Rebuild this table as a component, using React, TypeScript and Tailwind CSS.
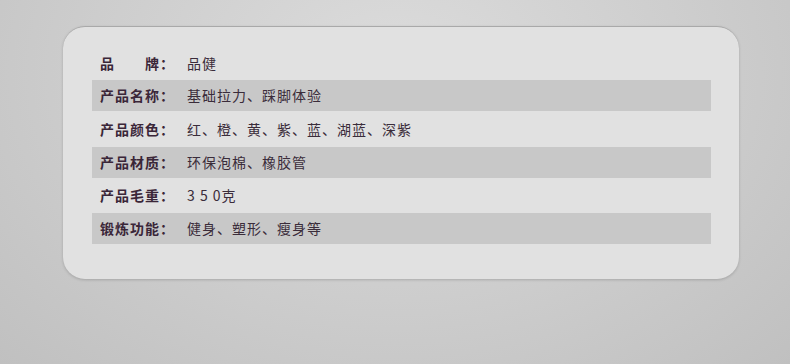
import React from 'react';

const rows = [
  { label: '品\u3000\u3000牌：', value: '品健', h: 'h-[33px]' },
  { label: '产品名称：', value: '基础拉力、踩脚体验', h: 'h-[31px]', striped: true },
  { label: '产品颜色：', value: '红、橙、黄、紫、蓝、湖蓝、深紫', h: 'h-[36px]' },
  { label: '产品材质：', value: '环保泡棉、橡胶管', h: 'h-[31px]', striped: true },
  { label: '产品毛重：', value: '3 5 0克', h: 'h-[35px]' },
  { label: '锻炼功能：', value: '健身、塑形、瘦身等', h: 'h-[31px]', striped: true },
];

export default function App() {
  return (
    <div
      className="w-[790px] h-[364px] overflow-hidden bg-[radial-gradient(ellipse_at_50%_20%,#dcdcdc_0%,#cdcdcd_55%,#c0c0c0_100%)] pt-[26px] pl-[63px]"
      style={{ fontFamily: '"Noto Sans CJK SC", "Noto Sans", sans-serif' }}
    >
      <div className="w-[676px] h-[253px] rounded-[22px] bg-[#e1e1e1] border-t border-[#a9a9a9] shadow-[0_1px_3px_rgba(0,0,0,0.18)] pt-[20px] pl-[29px]">
        <div className="w-[619px] flex flex-col">
          {rows.map((r) => (
            <div
              key={r.label}
              className={`${r.h} flex items-center pl-[8px] ${r.striped ? 'bg-[#c8c8c8]' : ''}`}
            >
              <span className="w-[87px] shrink-0 text-[14px] font-bold text-[#3a2638] tracking-[1px] whitespace-pre">
                {r.label}
              </span>
              <span className="text-[14px] text-[#3a2c3a] tracking-[1px]">{r.value}</span>
            </div>
          ))}
        </div>
      </div>
    </div>
  );
}
